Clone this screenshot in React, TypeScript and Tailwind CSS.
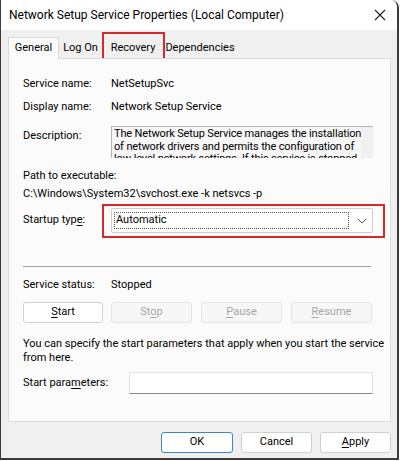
import React from "react";

const font = { fontFamily: "Roboto, 'Liberation Sans', Arial, sans-serif" };

function Btn({ label, u, enabled, primary, w = "w-[80px]" }: { label: string; u: number; enabled?: boolean; primary?: boolean; w?: string }) {
  return (
    <div
      className={`${w} h-[21px] flex items-center justify-center rounded-[3px] text-[11px] ${
        primary
          ? "bg-white border border-[#3a86c8] text-black"
          : enabled
          ? "bg-white border border-[#d0d0d0] text-black"
          : "bg-[#f7f7f7] border border-[#e4e4e4] text-[#a6a6a6]"
      }`}
    >
      {u < 0 ? (
        <span>{label}</span>
      ) : (
        <span>
          {label.slice(0, u)}
          <span className="underline underline-offset-[2px]">{label.slice(u, u + 1)}</span>
          {label.slice(u + 1)}
        </span>
      )}
    </div>
  );
}

export default function App() {
  return (
    <div className="w-[400px] h-[461px] bg-white" style={font}>
      <div className="w-[399px] h-[460px] bg-[#f0f0f0] border-l border-r-2 border-b-2 border-[#3b3b3b] rounded-tr-[8px] flex flex-col overflow-hidden">
        {/* title bar */}
        <div className="h-[30px] bg-white flex items-center justify-between pl-[8px] pr-[9px] shrink-0">
          <span className="text-[12px] text-black">Network Setup Service Properties (Local Computer)</span>
          <svg width="12" height="12" viewBox="0 0 12 12" className="mr-[2px]">
            <path d="M1 1 L11 11 M11 1 L1 11" stroke="#222" strokeWidth="1.1" />
          </svg>
        </div>
        {/* tabs */}
        <div className="flex items-end pl-[7px] pt-[6px] h-[28px] shrink-0 text-[11px] text-black relative">
          <div className="w-[51px] h-[22px] bg-[#fbfbfb] border border-b-0 border-[#d9d9d9] flex items-center justify-center relative z-10 -mb-px">General</div>
          <div className="w-[43px] h-[19px] flex items-center justify-center">Log On</div>
          <div className="w-[62px] h-[19px] flex items-center justify-center relative">
            Recovery
            <div className="absolute left-[0px] top-[-7px] w-[63px] h-[29px] border-2 border-[#d42a2a]"></div>
          </div>
          <div className="w-[72px] h-[19px] flex items-center justify-center">Dependencies</div>
        </div>
        {/* panel */}
        <div className="ml-[7px] w-[383px] h-[364px] bg-[#fbfbfb] border border-[#dcdcdc] shrink-0 text-[11px] text-black relative">
          <div className="pl-[14px] pt-[17px] flex flex-col">
            <div className="flex h-[16px] items-center">
              <span className="w-[88px]">Service name:</span>
              <span>NetSetupSvc</span>
            </div>
            <div className="flex h-[16px] items-center mt-[7px]">
              <span className="w-[88px]">Display name:</span>
              <span>Network Setup Service</span>
            </div>
            <div className="flex mt-[11px] items-start">
              <span className="w-[88px] h-[16px] flex items-center mt-[2px]">Description:</span>
              <div className="w-[262px] h-[32px] bg-[#f7f7f7] border-t border-l border-[#b5b5b5] overflow-hidden flex">
                <div className="flex-1 pl-[2px] pt-px leading-[12.5px] text-black whitespace-nowrap tracking-[-0.15px]">
                  <div>The Network Setup Service manages the installation</div>
                  <div>of network drivers and permits the configuration of</div>
                  <div>low-level network settings.  If this service is stopped</div>
                </div>
                <div className="w-[16px] bg-[#f0f0f0]"></div>
              </div>
            </div>
            <div className="h-[16px] flex items-center mt-[10px]">Path to executable:</div>
            <div className="h-[16px] flex items-center mt-[2px]">C:\Windows\System32\svchost.exe -k netsvcs -p</div>
            <div className="flex items-center mt-[6px] relative">
              <span className="w-[88px]">
                Startup typ<span className="underline underline-offset-[2px]">e</span>:
              </span>
              <div className="w-[262px] h-[25px] bg-white border border-[#cfcfcf] rounded-[2px] flex items-center pl-[2px] pr-[5px]">
                <div className="flex-1 h-[17px] border border-dotted border-[#555] flex items-center pl-[1px] mr-[8px]">Automatic</div>
                <svg width="10" height="6" viewBox="0 0 10 6">
                  <path d="M1 1 L5 5 L9 1" stroke="#555" strokeWidth="1" fill="none" />
                </svg>
              </div>
              <div className="absolute left-[79px] top-[-4px] w-[283px] h-[34px] border-2 border-[#d42a2a]"></div>
            </div>
            <div className="w-[348px] h-px bg-[#a0a0a0] mt-[33px]"></div>
            <div className="flex h-[16px] items-center mt-[10px]">
              <span className="w-[88px]">Service status:</span>
              <span>Stopped</span>
            </div>
            <div className="flex mt-[9px] gap-[8px]">
              <Btn label="Start" u={0} enabled w="w-[80px]" />
              <Btn label="Stop" u={2} w="w-[81px]" />
              <div className="ml-[1px]"><Btn label="Pause" u={0} w="w-[81px]" /></div>
              <div className="ml-[1px]"><Btn label="Resume" u={0} w="w-[81px]" /></div>
            </div>
            <div className="mt-[14px] leading-[14px] whitespace-nowrap">
              <div>You can specify the start parameters that apply when you start the service</div>
              <div>from here.</div>
            </div>
            <div className="flex items-center mt-[7px]">
              <span className="w-[106px]">
                Start para<span className="underline underline-offset-[2px]">m</span>eters:
              </span>
              <div className="w-[244px] h-[22px] bg-white border border-[#e2e2e2] border-b-[#8a8a8a]"></div>
            </div>
          </div>
        </div>
        {/* bottom buttons */}
        <div className="flex justify-end gap-[8px] pr-[6px] mt-[10px]">
          <Btn label="OK" u={-1} primary w="w-[72px]" />
          <Btn label="Cancel" u={-1} enabled w="w-[71px]" />
          <Btn label="Apply" u={0} enabled w="w-[71px]" />
        </div>
      </div>
    </div>
  );
}
